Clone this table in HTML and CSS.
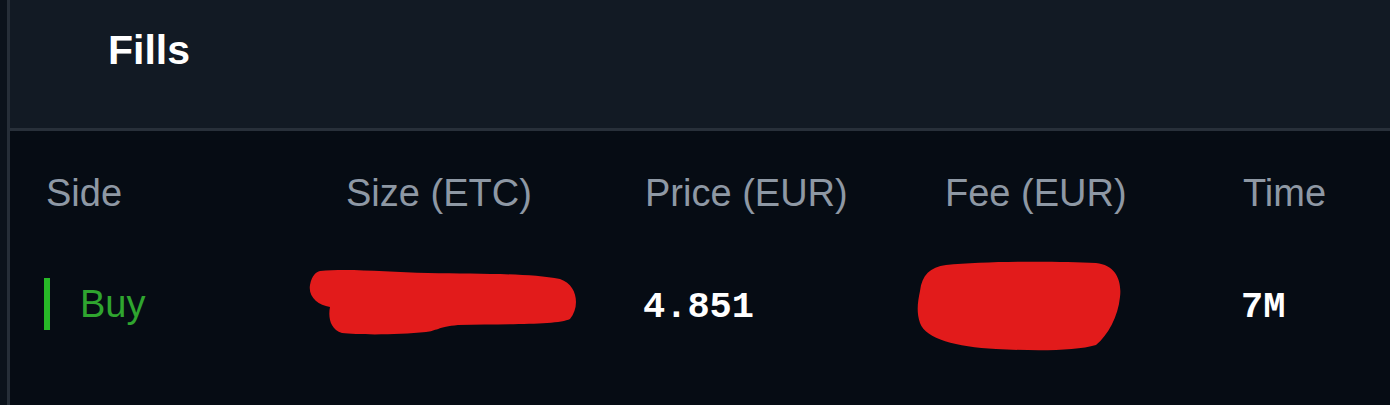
FILE: index.html
```html
<!DOCTYPE html>
<html>
<head>
<meta charset="utf-8">
<link rel="stylesheet" href="styles.css">
</head>
<body>
<div class="app">
  <div class="gutter"></div>
  <div class="panel">
    <div class="panel-head"><h1 class="title">Fills</h1></div>
    <div class="panel-body">
      <div class="table">
        <div class="th">Side</div>
        <div class="th">Size (ETC)</div>
        <div class="th">Price (EUR)</div>
        <div class="th">Fee (EUR)</div>
        <div class="th">Time</div>

        <div class="td side"><span class="bar"></span><span class="buy">Buy</span></div>
        <div class="td redact-cell">
          <svg class="blob blob1" width="272" height="70" viewBox="0 0 272 70">
            <path d="M12 4 C40 1 80 5 120 6 C170 7 220 6 252 12 C270 18 272 40 262 52 C250 58 200 57 150 58 C130 60 128 64 118 65 C90 68 50 68 34 66 C22 62 20 50 22 40 C10 38 0 30 2 18 C4 8 8 5 12 4 Z" fill="#e21b1b"/>
          </svg>
        </div>
        <div class="td mono">4.851</div>
        <div class="td redact-cell">
          <svg class="blob blob2" width="208" height="92" viewBox="0 0 208 92">
            <path d="M30 4 C70 0 140 0 180 2 C200 4 206 20 204 36 C202 56 192 74 180 84 C160 90 120 90 80 88 C40 86 10 78 4 62 C0 50 2 40 4 30 C6 14 14 6 30 4 Z" fill="#e21b1b"/>
          </svg>
        </div>
        <div class="td mono">7M</div>
      </div>
    </div>
  </div>
</div>
</body>
</html>
```

FILE: styles.css
```css
html, body {
  margin: 0;
  padding: 0;
  background: #060c14;
  height: 100%;
  overflow: hidden;
}

.app {
  display: flex;
  height: 405px;
  width: 1390px;
  font-family: "Liberation Sans", Arial, sans-serif;
}

.gutter {
  width: 7px;
  background: #0b121b;
  border-right: 3px solid #262e38;
  flex: none;
}

.panel {
  flex: 1;
  display: flex;
  flex-direction: column;
}

.panel-head {
  height: 131px;
  box-sizing: border-box;
  background: #121a24;
  border-bottom: 3px solid #28303a;
  padding: 25px 0 0 98px;
}

.title {
  margin: 0;
  font-size: 41px;
  font-weight: bold;
  color: #ffffff;
  line-height: 50px;
}

.panel-body {
  flex: 1;
  background: #060c14;
  padding: 40px 0 0 34px;
}

.table {
  display: grid;
  grid-template-columns: 300px 299px 300px 298px 150px;
  row-gap: 67px;
}

.th {
  font-size: 38px;
  line-height: 44px;
  color: #8e98a4;
  padding-left: 2px;
}

.td {
  font-size: 38px;
  line-height: 44px;
  color: #ffffff;
  height: 44px;
  display: flex;
  align-items: center;
}

.side {
  gap: 30px;
}

.bar {
  width: 6px;
  height: 52px;
  background: #27b927;
  flex: none;
}

.buy {
  color: #2fa52f;
}

.mono {
  font-family: "Liberation Mono", "Courier New", monospace;
  font-weight: bold;
  font-size: 37px;
  padding-left: 0;
  padding-top: 3px;
}

.redact-cell {
  position: relative;
}

.blob {
  position: absolute;
  display: block;
}

.blob1 {
  left: -36px;
  top: -15px;
}

.blob2 {
  left: -27px;
  top: -21px;
}
```
